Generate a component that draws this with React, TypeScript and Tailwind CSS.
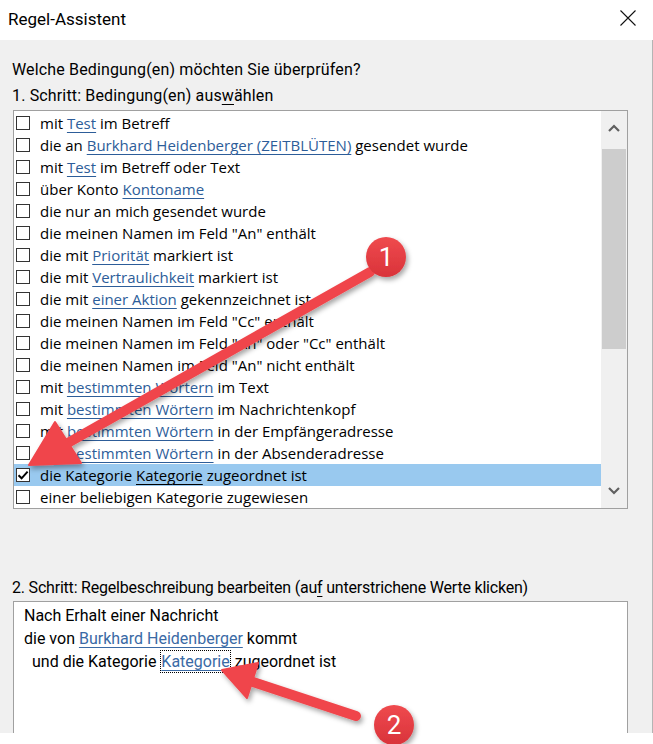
import React from "react";

type Seg = { t: string; link?: boolean };

const rows: Seg[][] = [
  [{ t: "mit " }, { t: "Test", link: true }, { t: " im Betreff" }],
  [{ t: "die an " }, { t: "Burkhard Heidenberger (ZEITBLÜTEN)", link: true }, { t: " gesendet wurde" }],
  [{ t: "mit " }, { t: "Test", link: true }, { t: " im Betreff oder Text" }],
  [{ t: "über Konto " }, { t: "Kontoname", link: true }],
  [{ t: "die nur an mich gesendet wurde" }],
  [{ t: 'die meinen Namen im Feld "An" enthält' }],
  [{ t: "die mit " }, { t: "Priorität", link: true }, { t: " markiert ist" }],
  [{ t: "die mit " }, { t: "Vertraulichkeit", link: true }, { t: " markiert ist" }],
  [{ t: "die mit " }, { t: "einer Aktion", link: true }, { t: " gekennzeichnet ist" }],
  [{ t: 'die meinen Namen im Feld "Cc" enthält' }],
  [{ t: 'die meinen Namen im Feld "An" oder "Cc" enthält' }],
  [{ t: 'die meinen Namen im Feld "An" nicht enthält' }],
  [{ t: "mit " }, { t: "bestimmten Wörtern", link: true }, { t: " im Text" }],
  [{ t: "mit " }, { t: "bestimmten Wörtern", link: true }, { t: " im Nachrichtenkopf" }],
  [{ t: "mit " }, { t: "bestimmten Wörtern", link: true }, { t: " in der Empfängeradresse" }],
  [{ t: "mit " }, { t: "bestimmten Wörtern", link: true }, { t: " in der Absenderadresse" }],
  [{ t: "die Kategorie " }, { t: "Kategorie", link: true }, { t: " zugeordnet ist" }],
  [{ t: "einer beliebigen Kategorie zugewiesen" }],
];

const SELECTED = 16;

function Checkbox({ checked }: { checked: boolean }) {
  return (
    <div className="w-[14px] h-[14px] border border-[#333333] bg-white flex items-center justify-center shrink-0">
      {checked && (
        <svg width="12" height="12" viewBox="0 0 12 12">
          <path d="M1.5 6.2 L4.6 9.3 L10.6 2.6" fill="none" stroke="#000" strokeWidth="2" />
        </svg>
      )}
    </div>
  );
}

function Row({ segs, index }: { segs: Seg[]; index: number }) {
  const sel = index === SELECTED;
  return (
    <div className={`h-[22px] flex items-center pl-[2px] ${sel ? "bg-[#99c9ef]" : ""}`}>
      <Checkbox checked={sel} />
      <div className="ml-[10px] whitespace-pre text-[15px] leading-[22px] text-black font-['Open_Sans',sans-serif]">
        {segs.map((s, i) =>
          s.link ? (
            <span
              key={i}
              className={`underline decoration-1 underline-offset-[3px] ${sel ? "text-black" : "text-[#2d5d99]"}`}
            >
              {s.t}
            </span>
          ) : (
            <span key={i}>{s.t}</span>
          )
        )}
      </div>
    </div>
  );
}

function Chevron({ up }: { up: boolean }) {
  return (
    <svg width="12" height="8" viewBox="0 0 12 8">
      <path
        d={up ? "M1 7 L6 2 L11 7" : "M1 1 L6 6 L11 1"}
        fill="none"
        stroke="#606060"
        strokeWidth="2.2"
      />
    </svg>
  );
}

function Arrows() {
  return (
    <svg
      className="absolute top-0 left-0 pointer-events-none"
      width="653"
      height="744"
      viewBox="0 0 653 744"
    >
      <defs>
        <filter id="sh" x="-20%" y="-20%" width="140%" height="140%">
          <feDropShadow dx="2" dy="3" stdDeviation="2.5" floodColor="#000" floodOpacity="0.35" />
        </filter>
        <linearGradient id="cg" x1="0" y1="0" x2="0" y2="1">
          <stop offset="0" stopColor="#ef4a4e" />
          <stop offset="1" stopColor="#d9333a" />
        </linearGradient>
      </defs>
      <g filter="url(#sh)">
        <line x1="66" y1="444" x2="370" y2="272" stroke="#f0454b" strokeWidth="10" strokeLinecap="round" />
        <polygon points="29,465 55,422 81,463" fill="#f0454b" stroke="#f0454b" strokeWidth="2" strokeLinejoin="round" />
        <circle cx="386" cy="257" r="20" fill="url(#cg)" />
      </g>
      <text
        x="386"
        y="266"
        textAnchor="middle"
        fill="#ffffff"
        fontSize="26"
        fontFamily="Roboto, 'Liberation Sans', sans-serif"
      >
        1
      </text>
      <g filter="url(#sh)">
        <line x1="250" y1="681" x2="356" y2="716" stroke="#f0454b" strokeWidth="10" strokeLinecap="round" />
        <polygon points="222,670 258,663 247,698" fill="#f0454b" stroke="#f0454b" strokeWidth="2" strokeLinejoin="round" />
        <circle cx="394" cy="725" r="20" fill="url(#cg)" />
      </g>
      <text
        x="394"
        y="734"
        textAnchor="middle"
        fill="#ffffff"
        fontSize="26"
        fontFamily="Roboto, 'Liberation Sans', sans-serif"
      >
        2
      </text>
    </svg>
  );
}

export default function App() {
  return (
    <div className="relative w-[653px] h-[744px] bg-white overflow-hidden font-['Roboto',sans-serif] text-black">
      {/* Title bar */}
      <div className="h-[40px] flex items-center justify-between pl-[8px] pr-[17px] bg-white">
        <span className="text-[17px] leading-[22px] mt-[-2px]">Regel-Assistent</span>
        <svg width="16" height="16" viewBox="0 0 16 16" className="mt-[-4px]">
          <path d="M0.5 0.5 L15.5 15.5 M15.5 0.5 L0.5 15.5" stroke="#111" strokeWidth="1.1" />
        </svg>
      </div>

      {/* Body */}
      <div className="h-[693px] bg-[#f0f0f0] border-r border-[#b4b4b4] flex flex-col pt-[17px]">
        <div className="pl-[12px] text-[16px] leading-[26px] tracking-[0.15px]">Welche Bedingung(en) möchten Sie überprüfen?</div>
        <div className="pl-[12px] text-[16px] leading-[26px] tracking-[0.15px]">
          1. Schritt: Bedingung(en) aus<span className="underline underline-offset-[3px] decoration-1">w</span>ählen
        </div>

        {/* List box */}
        <div className="ml-[13px] mt-[1px] w-[615px] h-[399px] border border-[#a0a0a0] bg-white flex">
          <div className="flex-1 pt-[1px]">
            {rows.map((r, i) => (
              <Row key={i} segs={r} index={i} />
            ))}
          </div>
          <div className="w-[26px] bg-[#f0f0f0] flex flex-col">
            <div className="h-[34px] flex items-center justify-center">
              <Chevron up />
            </div>
            <div className="mt-[4px] h-[200px] mx-[1px] bg-[#cdcdcd]" />
            <div className="flex-1" />
            <div className="h-[34px] flex items-center justify-center">
              <Chevron up={false} />
            </div>
          </div>
        </div>

        <div className="pl-[12px] mt-[66px] text-[16px] leading-[26px] tracking-[-0.2px]">
          2. Schritt: Regelbeschreibung bearbeiten (au
          <span className="underline underline-offset-[3px] decoration-1">f</span> unterstrichene Werte klicken)
        </div>

        {/* Description box */}
        <div className="ml-[13px] w-[615px] flex-1 border-l border-t border-r border-[#a0a0a0] bg-white pt-[2px] pl-[10px] text-[16px] leading-[23px]">
          <div>Nach Erhalt einer Nachricht</div>
          <div>
            die von{" "}
            <span className="text-[#3a6aa5] underline underline-offset-[3px] decoration-1">Burkhard Heidenberger</span>{" "}
            kommt
          </div>
          <div className="pl-[8px] flex">
            <span className="whitespace-pre">und die Kategorie </span>
            <span className="border border-dotted border-black text-[#3a6aa5] underline underline-offset-[3px] decoration-1 leading-[21px]">
              Kategorie
            </span>
            <span className="whitespace-pre"> zugeordnet ist</span>
          </div>
        </div>
      </div>

      <Arrows />
    </div>
  );
}
